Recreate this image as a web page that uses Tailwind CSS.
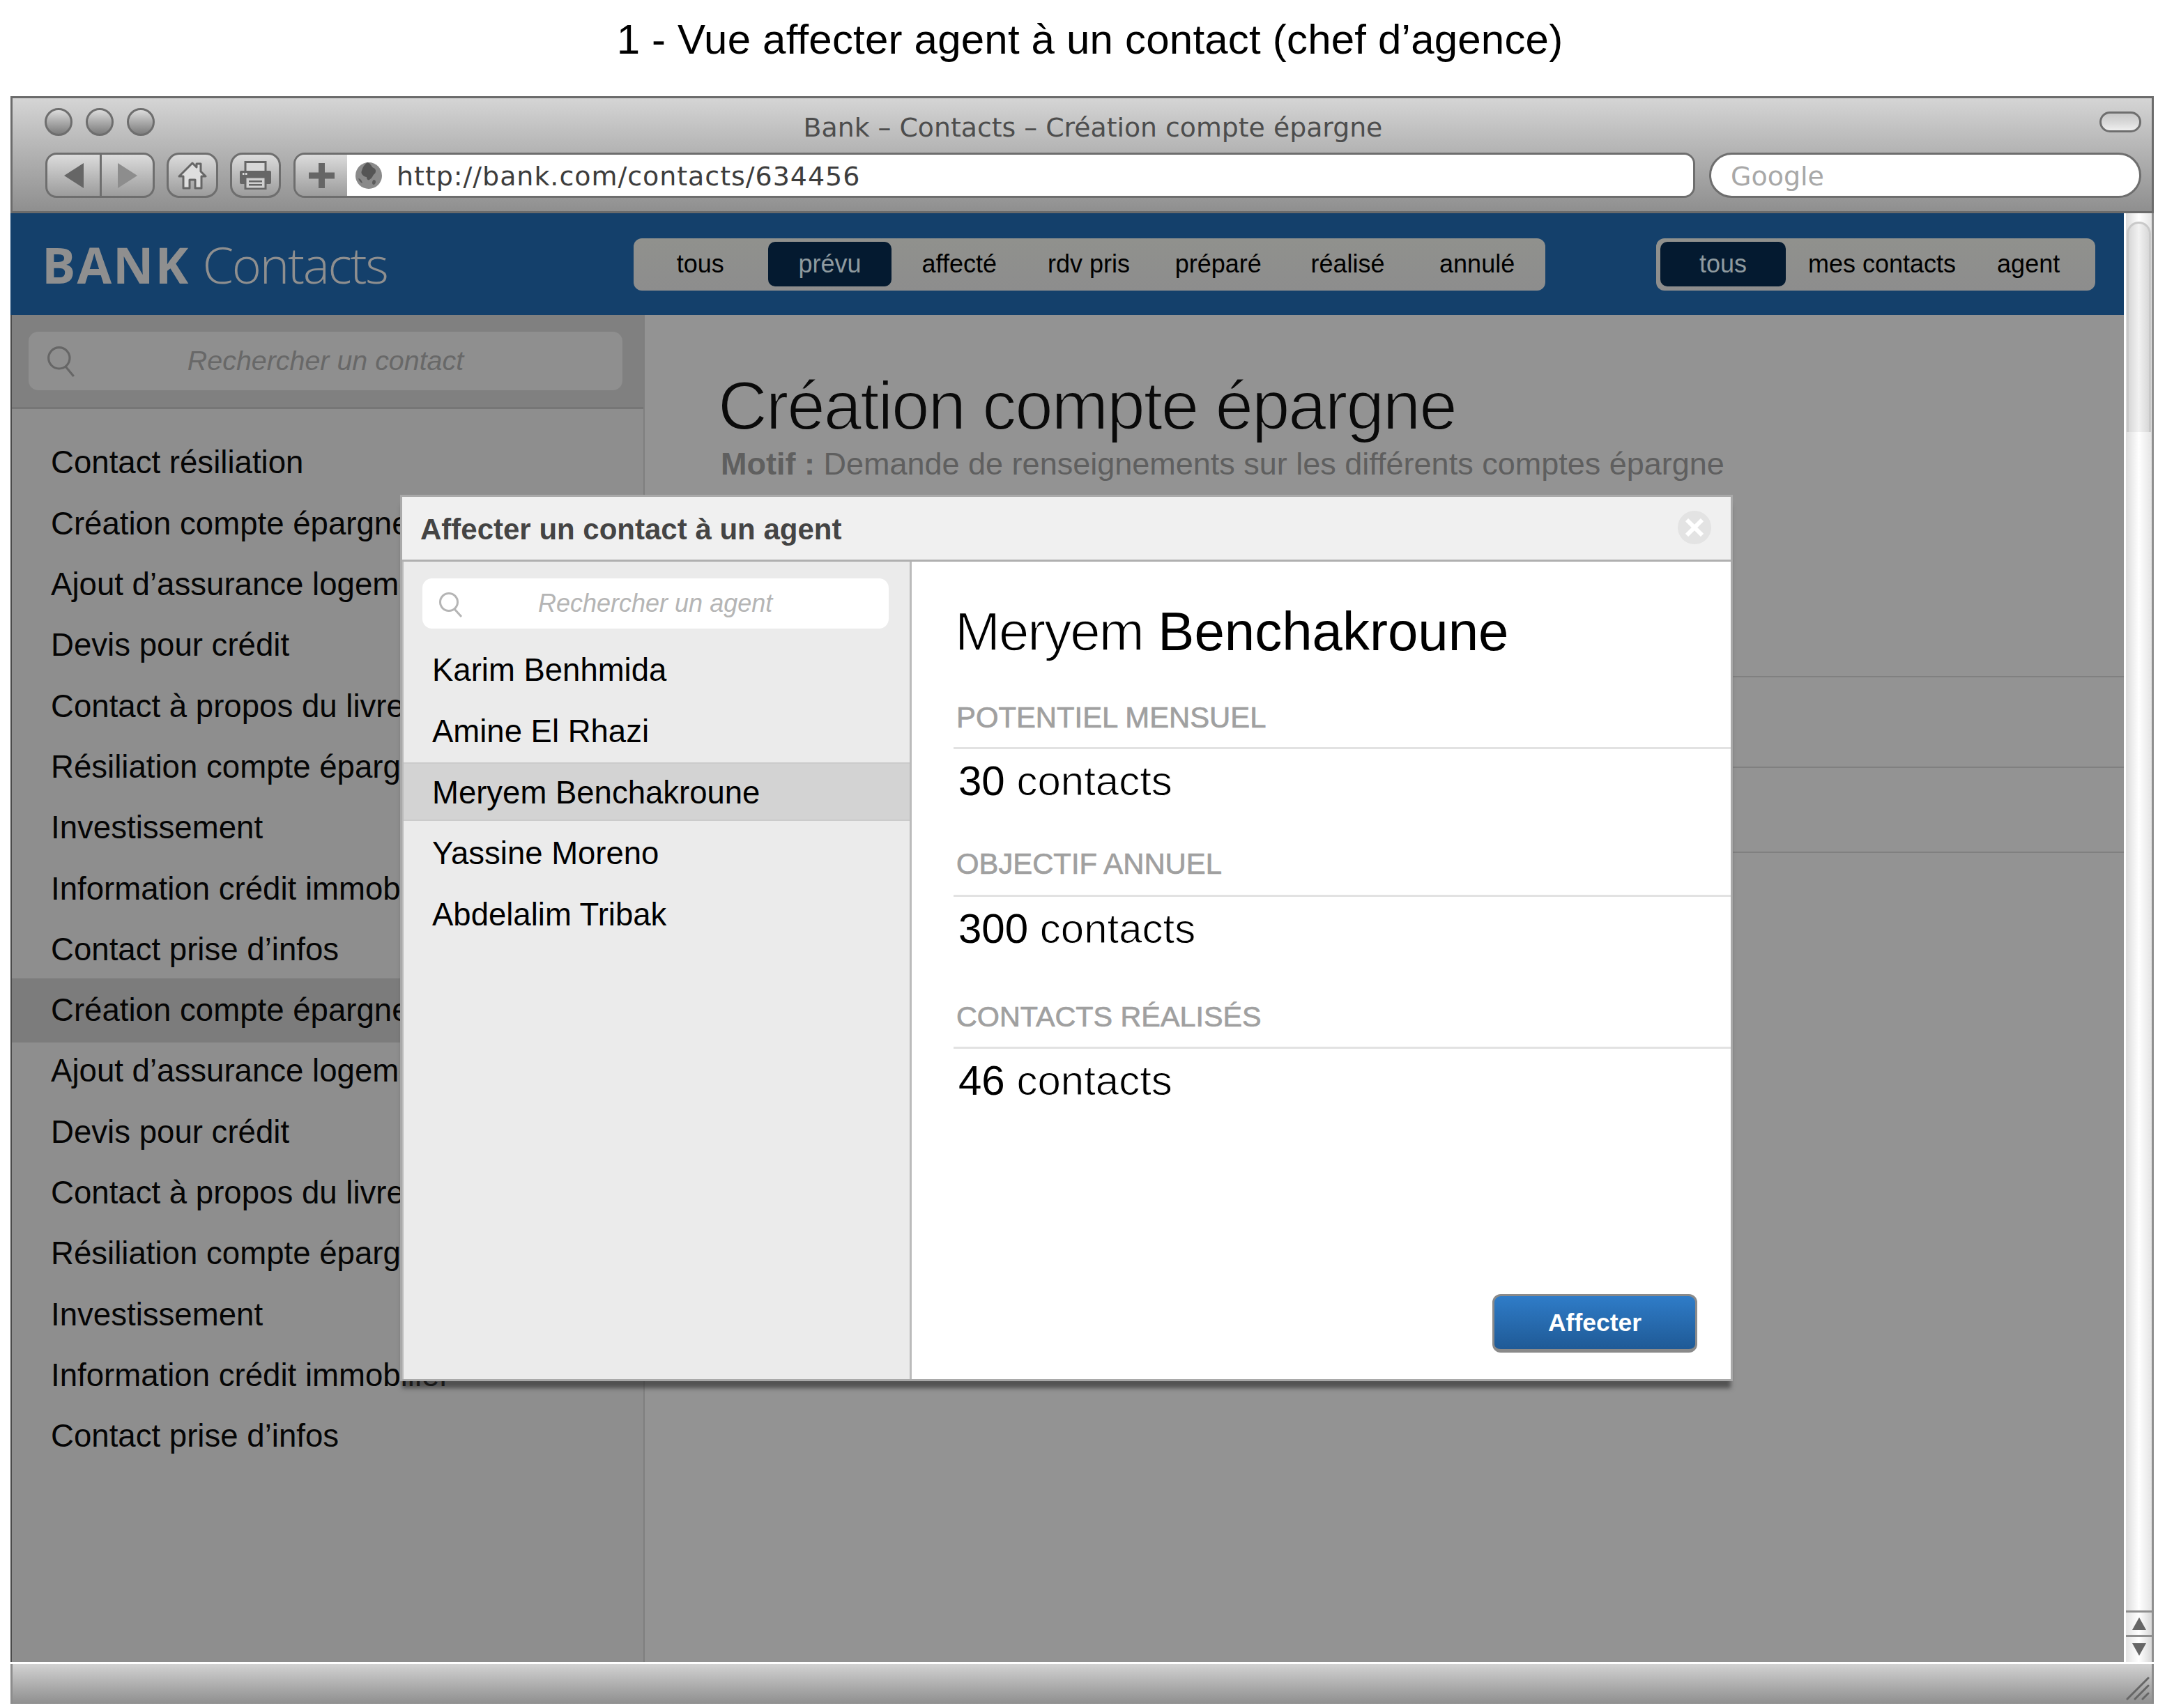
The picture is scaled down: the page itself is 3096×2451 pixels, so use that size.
<!DOCTYPE html>
<html lang="fr">
<head>
    <meta charset="UTF-8">
    <title>Vue affecter agent</title>
    <script src="https://cdn.jsdelivr.net/npm/@tailwindcss/browser@4"></script>
</head>
<body class="bg-white w-[3096px] h-[2451px] overflow-hidden font-['Liberation_Sans',Arial,sans-serif]">
    <!-- caption -->
    <div class="h-[138px] pl-[31px] flex items-start justify-center pt-[22px] text-[60px] leading-[70px] tracking-[0.2px] text-black">1 - Vue affecter agent à un contact (chef d’agence)</div>

    <!-- browser window -->
    <div class="relative ml-[15px] w-[3075px] h-[2307px] flex flex-col">
        <!-- chrome -->
        <div class="relative h-[168px] border-[3px] border-[#6b6b6b] bg-linear-to-b from-[#d5d5d5] to-[#8f8f8f]">
            <div class="flex gap-[19px] pl-[46px] pt-[14px] h-[78px]">
                <span class="w-[40px] h-[40px] rounded-full border-[3px] border-[#6e6e6e] bg-linear-to-b from-[#dcdcdc] to-[#7d7d7d]"></span>
                <span class="w-[40px] h-[40px] rounded-full border-[3px] border-[#6e6e6e] bg-linear-to-b from-[#dcdcdc] to-[#7d7d7d]"></span>
                <span class="w-[40px] h-[40px] rounded-full border-[3px] border-[#6e6e6e] bg-linear-to-b from-[#dcdcdc] to-[#7d7d7d]"></span>
            </div>
            <div class="absolute left-[31px] right-0 top-[18px] text-center font-['DejaVu_Sans',sans-serif] text-[37.800px] leading-[48px] text-[#4d4d4d]">Bank – Contacts – Création compte épargne</div>
            <span class="absolute left-[2994px] top-[19px] w-[60px] h-[30px] rounded-full border-[3px] border-[#6e6e6e] bg-linear-to-b from-[#c8c8c8] via-[#d8d8d8] to-[#efefef]"></span>

            <div class="flex items-start pl-[47px]">
                <!-- back / forward -->
                <div class="flex w-[157px] h-[65px] rounded-[16px] border-[3px] border-[#6e6e6e] bg-linear-to-b from-[#dcdcdc] to-[#9c9c9c] overflow-hidden">
                    <div class="w-[78px] h-full flex items-center justify-center border-r-[3px] border-[#6e6e6e]">
                        <svg width="28" height="36" viewBox="0 0 28 36"><path d="M28 0V36L0 18Z" fill="#666"/></svg>
                    </div>
                    <div class="flex-1 h-full flex items-center justify-center">
                        <svg width="28" height="36" viewBox="0 0 28 36"><path d="M0 0V36L28 18Z" fill="#8d8d8d"/></svg>
                    </div>
                </div>
                <!-- home -->
                <div class="ml-[17px] flex items-center justify-center w-[74px] h-[65px] rounded-[18px] border-[3px] border-[#6e6e6e] bg-linear-to-b from-[#dcdcdc] to-[#9c9c9c]">
                    <svg width="42" height="40" viewBox="0 0 42 40"><path d="M2 21 21 2l6 6V3h6v11l7 7h-6v17H25V26h-8v12H8V21Z" fill="#dedede" stroke="#666" stroke-width="3" stroke-linejoin="round"/></svg>
                </div>
                <!-- print -->
                <div class="ml-[17px] flex items-center justify-center w-[73px] h-[65px] rounded-[18px] border-[3px] border-[#6e6e6e] bg-linear-to-b from-[#dcdcdc] to-[#9c9c9c]">
                    <svg width="45" height="41" viewBox="0 0 45 41">
                        <rect x="8" y="1.5" width="29" height="16" fill="#d8d8d8" stroke="#666" stroke-width="3"/>
                        <rect x="0" y="14" width="45" height="19" rx="2" fill="#666"/>
                        <rect x="8" y="23" width="29" height="17" fill="#d0d0d0" stroke="#666" stroke-width="3"/>
                        <rect x="13" y="28" width="19" height="2.5" fill="#666"/>
                        <rect x="13" y="33" width="19" height="2.5" fill="#666"/>
                        <rect x="4" y="17" width="2.5" height="3" fill="#ddd"/>
                        <rect x="8" y="17" width="2.5" height="3" fill="#ddd"/>
                    </svg>
                </div>
                <!-- add + address bar -->
                <div class="ml-[18px] flex w-[2011px] h-[65px] rounded-[16px] border-[3px] border-[#6e6e6e] overflow-hidden">
                    <div class="w-[74px] h-full flex items-center justify-center bg-linear-to-b from-[#dcdcdc] to-[#9c9c9c]">
                        <svg width="37" height="36" viewBox="0 0 37 36"><path d="M14 0h9v13.500h14v9H23V36h-9V22.500H0v-9h14Z" fill="#666"/></svg>
                    </div>
                    <div class="flex-1 bg-white flex items-center pl-[11px] gap-[20px]">
                        <svg width="40" height="40" viewBox="0 0 38 40">
                            <circle cx="19" cy="20" r="19" fill="#8a8a8a"/>
                            <path d="M17 1c6 2 5 6 9 8 3 1 4 5 2 8-3 1-3 6-7 8-2 3-5 1-5-3-5-1-9-5-7-9 1-5 4-9 8-12Z" fill="#555"/>
                            <path d="M26 26c3 0 4 3 2 6-2 2-4 1-4-2 0-2 1-3 2-4ZM4 24c3 0 5 3 6 7-3-1-5-4-6-7Z" fill="#5c5c5c"/>
                        </svg>
                        <span class="pt-[3px] font-['DejaVu_Sans',sans-serif] text-[38px] leading-none tracking-[0.95px] text-[#3d3d3d]">http://bank.com/contacts/634456</span>
                    </div>
                </div>
                <!-- google -->
                <div class="ml-[20px] flex items-center pt-[3px] pl-[28px] w-[620px] h-[65px] rounded-full border-[3px] border-[#6e6e6e] bg-white font-['DejaVu_Sans',sans-serif] text-[38px] text-[#a8a8a8]">Google</div>
            </div>
        </div>

        <!-- page -->
        <div class="flex h-[2079px]">
            <div class="w-[3032px] flex flex-col border-l-[2px] border-[#4a4a4a] bg-[#939393]">
                <!-- blue header -->
                <div class="h-[146px] flex items-center bg-[#14406b] pl-[45px] -ml-[2px] shrink-0">
                    <div class="w-[849px] flex gap-[18px] text-[#8f8f8f] text-[72px] leading-none font-['Open_Sans',sans-serif]"><span class="font-bold tracking-[2px]">BANK</span> <span class="font-light tracking-[-2.300px]">Contacts</span></div>
                    <!-- status filter -->
                    <div class="grid grid-cols-7 w-[1308px] h-[75px] pl-[3px] pr-[5px] rounded-[12px] bg-linear-to-b from-[#90918d] to-[#8d8d8d] items-center text-center text-[36px] text-black">
                        <span>tous</span>
                        <span class="h-[64px] mx-[4px] flex items-center justify-center rounded-[10px] bg-[#041a30] text-[#8f9a9f]">prévu</span>
                        <span>affecté</span>
                        <span>rdv pris</span>
                        <span>préparé</span>
                        <span>réalisé</span>
                        <span>annulé</span>
                    </div>
                    <!-- owner filter -->
                    <div class="ml-[159px] flex items-center w-[630px] h-[75px] pl-[6px] rounded-[12px] bg-linear-to-b from-[#90918d] to-[#8d8d8d] text-[36px] text-black">
                        <span class="w-[180px] h-[64px] flex items-center justify-center rounded-[10px] bg-[#041a30] text-[#8f9a9f]">tous</span>
                        <span class="ml-[32px]">mes contacts</span>
                        <span class="ml-[59px]">agent</span>
                    </div>
                </div>

                <div class="flex flex-1 min-h-0">
                    <!-- contact list -->
                    <div class="w-[908px] shrink-0 border-r-[2px] border-[#7f7f7f] bg-[#8e8e8e]">
                        <div class="h-[135px] pt-[24px] pl-[24px] pr-[30px] bg-[#808080] border-b-[3px] border-[#767676]">
                            <div class="relative h-[84px] rounded-[14px] bg-[#8f8f8f] flex items-center justify-center text-[39.400px] italic text-[#686868]">
                                <svg class="absolute left-[27px] top-[21px]" width="42" height="44" viewBox="0 0 40 42" fill="none" stroke="#666" stroke-width="3"><circle cx="16" cy="16" r="14.500"/><path d="m25 28 11 13"/></svg>
                                Rechercher un contact
                            </div>
                        </div>
                        <ul class="pt-[34px] text-[45.600px] text-[#050505]">
                            <li class="h-[87.300px] flex items-center pl-[56px] whitespace-nowrap">Contact résiliation</li>
                            <li class="h-[87.300px] flex items-center pl-[56px] whitespace-nowrap">Création compte épargne</li>
                            <li class="h-[87.300px] flex items-center pl-[56px] whitespace-nowrap">Ajout d’assurance logement</li>
                            <li class="h-[87.300px] flex items-center pl-[56px] whitespace-nowrap">Devis pour crédit</li>
                            <li class="h-[87.300px] flex items-center pl-[56px] whitespace-nowrap">Contact à propos du livret</li>
                            <li class="h-[87.300px] flex items-center pl-[56px] whitespace-nowrap">Résiliation compte épargne</li>
                            <li class="h-[87.300px] flex items-center pl-[56px] whitespace-nowrap">Investissement</li>
                            <li class="h-[87.300px] flex items-center pl-[56px] whitespace-nowrap">Information crédit immobilier</li>
                            <li class="h-[87.300px] flex items-center pl-[56px] whitespace-nowrap">Contact prise d’infos</li>
                            <li class="h-[92px] -my-[2.350px] flex items-center pl-[56px] whitespace-nowrap bg-[#7c7c7c]">Création compte épargne</li>
                            <li class="h-[87.300px] flex items-center pl-[56px] whitespace-nowrap">Ajout d’assurance logement</li>
                            <li class="h-[87.300px] flex items-center pl-[56px] whitespace-nowrap">Devis pour crédit</li>
                            <li class="h-[87.300px] flex items-center pl-[56px] whitespace-nowrap">Contact à propos du livret</li>
                            <li class="h-[87.300px] flex items-center pl-[56px] whitespace-nowrap">Résiliation compte épargne</li>
                            <li class="h-[87.300px] flex items-center pl-[56px] whitespace-nowrap">Investissement</li>
                            <li class="h-[87.300px] flex items-center pl-[56px] whitespace-nowrap">Information crédit immobilier</li>
                            <li class="h-[87.300px] flex items-center pl-[56px] whitespace-nowrap">Contact prise d’infos</li>
                        </ul>
                    </div>
                    <!-- detail behind the dialog -->
                    <div class="flex-1 min-w-0 pl-[105px] pt-[70px]">
                        <h1 class="h-[122px] text-[98px] leading-[120px] tracking-[-2.050px] text-[#0a0a0a] [-webkit-text-stroke:2px_#939393]">Création compte épargne</h1>
                        <p class="text-[45px] leading-[56px] text-[#5f5f5f] whitespace-nowrap -mt-[6px] pl-[4px]"><b>Motif :</b> Demande de renseignements sur les différents comptes épargne</p>
                        <div class="-ml-[105px] mt-[276px] h-[130px] border-t-[2px] border-[#808080]"></div>
                        <div class="-ml-[105px] h-[122px] border-t-[2px] border-[#808080]"></div>
                        <div class="-ml-[105px] border-t-[2px] border-[#808080]"></div>
                    </div>
                </div>
            </div>
            <!-- scrollbar -->
            <div class="flex-1 flex flex-col bg-[#8f8f8f] pr-[3px]">
                <div class="flex-1 flex flex-col border-l-[3px] border-white ml-0">
                    <div class="h-[2005px] pt-[12px] px-[1px] bg-linear-to-r from-[#dcdcdc] via-white to-[#e4e4e4]">
                        <div class="h-[302px] rounded-t-[18px] border-[3px] border-b-0 border-[#c9c9c9] bg-linear-to-r from-[#d8d8d8] via-[#f2f2f2] to-[#d8d8d8]"></div>
                    </div>
                    <div class="mt-[3px] h-[32px] flex items-center justify-center bg-linear-to-r from-[#e4e4e4] via-white to-[#d8d8d8]">
                        <svg width="20" height="18" viewBox="0 0 20 18"><path d="M10 0 20 18H0Z" fill="#666"/></svg>
                    </div>
                    <div class="mt-[3px] h-[36px] flex items-center justify-center bg-linear-to-r from-[#e4e4e4] via-white to-[#d8d8d8]">
                        <svg width="20" height="18" viewBox="0 0 20 18"><path d="M0 0H20L10 18Z" fill="#666"/></svg>
                    </div>
                </div>
            </div>
        </div>

        <!-- status bar -->
        <div class="relative mt-[3px] h-[57px] border-l-[3px] border-r-[3px] border-[#8c8c8c] bg-linear-to-b from-[#d2d2d2] to-[#8f8f8f]">
            <svg class="absolute right-[3px] top-[18px]" width="34" height="34" viewBox="0 0 34 34" stroke="#666" stroke-width="3" stroke-linecap="round"><path d="M2 32 32 2M13 32 32 13M24 32l8-8"/></svg>
        </div>

        <!-- dialog -->
        <div class="absolute left-[559px] top-[572px] w-[1912px] h-[1272px] flex flex-col border-[3px] border-[#a9a9a9] bg-white shadow-[0_13px_6px_-3px_rgba(40,40,40,0.6)]">
            <div class="relative h-[93px] shrink-0 flex items-center pl-[26px] pt-[3px] bg-[#f0f0f0] border-b-[3px] border-[#b0b0b0] text-[42px] font-bold text-[#444]">
                Affecter un contact à un agent
                <span class="absolute right-[28px] top-[20px] w-[48px] h-[48px] rounded-full bg-[#e3e3e3] flex items-center justify-center">
                    <svg width="26" height="26" viewBox="0 0 26 26" stroke="#fff" stroke-width="6"><path d="M2 2 24 24M24 2 2 24"/></svg>
                </span>
            </div>
            <div class="flex flex-1 min-h-0">
                <!-- agents -->
                <div class="w-[731px] shrink-0 bg-[#ebebeb] border-l-[2px] border-r-[3px] border-[#bbb]">
                    <div class="pl-[27px] pr-[30px] pt-[24px]">
                        <div class="relative h-[72px] rounded-[14px] bg-white flex items-center pl-[166px] text-[36px] italic text-[#b5b5b5]">
                            <svg class="absolute left-[24px] top-[20px]" width="34" height="36" viewBox="0 0 34 36" fill="none" stroke="#b5b5b5" stroke-width="3"><circle cx="14" cy="14" r="12.500"/><path d="m22 24 10 11"/></svg>
                            Rechercher un agent
                        </div>
                    </div>
                    <ul class="mt-[16px] text-[45.500px] text-black">
                        <li class="h-[88px] flex items-center pl-[41px]">Karim Benhmida</li>
                        <li class="h-[88px] flex items-center pl-[41px]">Amine El Rhazi</li>
                        <li class="h-[84px] pt-[4px] flex items-center pl-[41px] bg-[#d3d3d3] border-y-[2px] border-[#cbcbcb]">Meryem Benchakroune</li>
                        <li class="h-[88px] mt-[3px] flex items-center pl-[41px]">Yassine Moreno</li>
                        <li class="h-[88px] flex items-center pl-[41px]">Abdelalim Tribak</li>
                    </ul>
                </div>
                <!-- agent detail -->
                <div class="relative flex-1 min-w-0 pl-[60px] pt-[52px]">
                    <h2 class="h-[98px] text-[78px] leading-[96px] pl-[2px] text-black"><span class="tracking-[-2px] [-webkit-text-stroke:1.500px_white]">Meryem</span> Benchakroune</h2>
                    <div class="mt-[48px] pl-[4px] h-[52px] flex items-center pt-[1px] text-[41.800px] text-[#a0a0a0] [-webkit-text-stroke:0.7px_#a0a0a0]">POTENTIEL MENSUEL</div>
                    <div class="mt-[16px] border-t-[3px] border-[#e2e2e2] pl-[7px] pt-[16px] h-[88px] text-[60px] leading-[60px]">30 <span class="[-webkit-text-stroke:1px_white]">contacts</span></div>
                    <div class="mt-[56px] pl-[4px] h-[52px] flex items-center pb-[4px] text-[41.800px] text-[#a0a0a0] [-webkit-text-stroke:0.7px_#a0a0a0]">OBJECTIF ANNUEL</div>
                    <div class="mt-[16px] border-t-[3px] border-[#e2e2e2] pl-[7px] pt-[16px] h-[88px] text-[60px] leading-[60px]">300 <span class="[-webkit-text-stroke:1px_white]">contacts</span></div>
                    <div class="mt-[62px] pl-[4px] h-[52px] flex items-center text-[41.300px] text-[#a0a0a0] [-webkit-text-stroke:0.7px_#a0a0a0]">CONTACTS RÉALISÉS</div>
                    <div class="mt-[16px] border-t-[3px] border-[#e2e2e2] pl-[7px] pt-[16px] h-[88px] text-[60px] leading-[60px]">46 <span class="[-webkit-text-stroke:1px_white]">contacts</span></div>
                    <button class="absolute right-[48px] bottom-[38px] w-[294px] h-[84px] pt-[2px] rounded-[12px] border-[3px] border-b-[5px] border-[#8a8a8a] bg-linear-to-b from-[#2f7cc8] to-[#1f5a96] text-white text-[35.500px] font-bold">Affecter</button>
                </div>
            </div>
        </div>
    </div>
</body>
</html>
